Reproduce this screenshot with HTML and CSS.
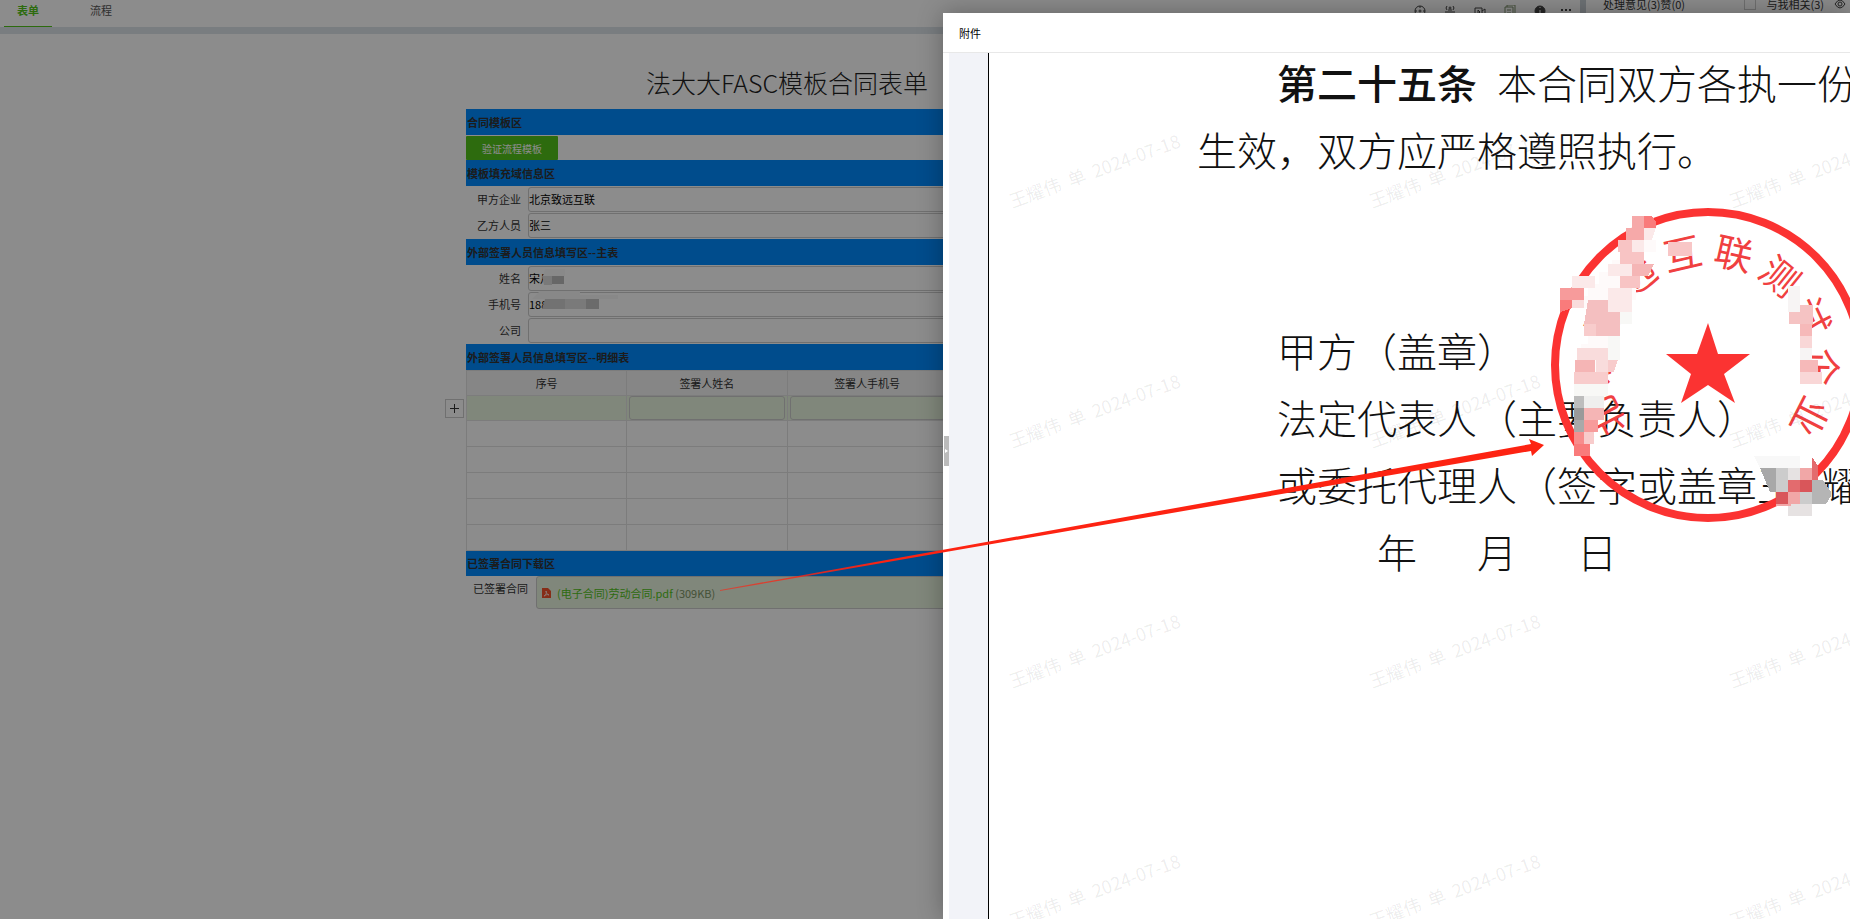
FILE: index.html
```html
<!DOCTYPE html>
<html lang="zh-CN">
<head>
    <meta charset="UTF-8">
    <meta name="viewport" content="width=device-width, initial-scale=1.0">
    <title>法大大FASC模板合同表单</title>
    <link rel="stylesheet" href="styles.css">
</head>
<body>
    <div class="page">
        <main class="main">
            <header class="topbar">
                <nav class="tabs">
                    <button class="tab active" type="button">表单</button>
                    <button class="tab" type="button">流程</button>
                </nav>
                <div class="tools">
                    <button type="button" aria-label="定位">
                        <svg viewBox="0 0 12 12"><circle cx="6" cy="6" r="5"/><circle cx="6" cy="6" r="1"/><path d="M6 1v2M6 9v2M1 6h2M9 6h2"/></svg>
                    </button>
                    <button type="button" aria-label="会议">
                        <svg viewBox="0 0 12 12"><circle cx="6" cy="3" r="1"/><path d="M3 1Q1 3 3 5M9 1q2 2 0 4M1 7h10M2 9h8M4 5h4"/></svg>
                    </button>
                    <button type="button" aria-label="视频">
                        <svg viewBox="0 0 12 12"><path d="M1 3h7v8H1zM8 6l3-2v6L8 8M4 5l2 2-2 2z"/></svg>
                    </button>
                    <button type="button" aria-label="复制">
                        <svg class="tool-green" viewBox="0 0 12 12"><path d="M1 2h8v10H1zM3 2V0h8v10H9M3 5h4M3 8h4"/></svg>
                    </button>
                    <button type="button" aria-label="信息">
                        <svg viewBox="0 0 12 12"><circle class="fill" cx="6" cy="6" r="5"/><path class="light" d="M6 5v4M6 2v1"/></svg>
                    </button>
                    <button class="more" type="button" aria-label="更多">
                        <svg viewBox="0 0 12 12"><path class="dots" d="M1 5h2M5 5h2M9 5h2"/></svg>
                    </button>
                </div>
            </header>

            <form class="form">
                <h1 class="form-title">法大大FASC模板合同表单</h1>

                <h2 class="section">合同模板区</h2>
                <div class="action-row">
                    <button class="verify-button" type="button">验证流程模板</button>
                </div>

                <h2 class="section">模板填充域信息区</h2>
                <div class="fields">
                    <div class="field">
                        <label for="company-a">甲方企业</label>
                        <input id="company-a" type="text" value="北京致远互联">
                    </div>
                    <div class="field">
                        <label for="person-b">乙方人员</label>
                        <input id="person-b" type="text" value="张三">
                    </div>
                </div>

                <h2 class="section">外部签署人员信息填写区--主表</h2>
                <div class="fields">
                    <div class="field">
                        <label for="name">姓名</label>
                        <input id="name" type="text" value="宋月">
                        <svg class="mask-name" viewBox="0 0 24 18">
                            <path fill="#fafafa" d="M3 0h20v7H1z"/>
                            <path fill="#dcdcdc" d="M0 7h10v9H2z"/>
                            <path fill="#bcbcbc" d="M10 7h12v8H10z"/>
                        </svg>
                    </div>
                    <div class="field">
                        <label for="phone">手机号</label>
                        <input id="phone" type="text" value="188">
                        <svg class="mask-phone" viewBox="0 0 88 20">
                            <path fill="#f8f8f8" d="M8 0h40v4h38v4H0z"/>
                            <path fill="#d0d0d0" d="M13 8h20v10H10z"/>
                            <path fill="#dedede" d="M33 8h21v10H33z"/>
                            <path fill="#c4c4c4" d="M54 8h13v10H54z"/>
                        </svg>
                    </div>
                    <div class="field">
                        <label for="corp">公司</label>
                        <input id="corp" type="text">
                    </div>
                </div>

                <h2 class="section">外部签署人员信息填写区--明细表</h2>
                <div class="detail">
                    <button class="add-button" type="button" aria-label="添加一行">
                        <svg viewBox="0 0 9 9"><path d="M4 0h1v4h4v1H5v4H4V5H0V4h4z"/></svg>
                    </button>
                    <table>
                        <thead>
                            <tr><th>序号</th><th>签署人姓名</th><th>签署人手机号</th><th></th></tr>
                        </thead>
                        <tbody>
                            <tr class="editing">
                                <td></td>
                                <td><input type="text" aria-label="签署人姓名"></td>
                                <td><input type="text" aria-label="签署人手机号"></td>
                                <td></td>
                            </tr>
                            <tr><td></td><td></td><td></td><td></td></tr>
                            <tr><td></td><td></td><td></td><td></td></tr>
                            <tr><td></td><td></td><td></td><td></td></tr>
                            <tr><td></td><td></td><td></td><td></td></tr>
                            <tr><td></td><td></td><td></td><td></td></tr>
                        </tbody>
                    </table>
                </div>

                <h2 class="section">已签署合同下载区</h2>
                <div class="download">
                    <span class="download-label">已签署合同</span>
                    <div class="file-box">
                        <svg class="file-icon" viewBox="0 0 9 10"><path fill="#f5532d" d="M0 0h6l3 3v7H0z"/><path fill="none" stroke="#ffd9cc" d="M2 8c2-1 3-3 2-5 0 2 1 3 3 4-2-1-3 0-5 1"/></svg>
                        <a href="#">(电子合同)劳动合同.pdf <span class="file-size">(309KB)</span></a>
                    </div>
                </div>
            </form>
        </main>

        <aside class="sidebar">
            <div class="opinion-bar">
                <span>处理意见(3)赞(0)</span>
                <label class="related"><input type="checkbox">与我相关(3)</label>
                <svg class="eye" viewBox="0 0 12 10"><path d="M1 5q5-8 10 0-5 8-10 0z"/><circle cx="6" cy="5" r="2"/></svg>
            </div>
        </aside>
    </div>

    <div class="overlay"></div>

    <section class="drawer">
        <header class="drawer-header">附件</header>
        <div class="drawer-body">
            <button class="handle" type="button" aria-label="收起">
                <svg viewBox="0 0 5 30"><path fill="#fff" d="M1 13l3 2-3 2z"/></svg>
            </button>
            <div class="viewer">
                <article class="paper">
                    <div class="contract">
                        <p class="indent"><strong>第二十五条</strong>本合同双方各执一份</p>
                        <p>生效，双方应严格遵照执行。</p>
                        <p class="indent signature">甲方（盖章）</p>
                        <p class="indent">法定代表人（主要负责人）</p>
                        <p class="indent">或委托代理人（签字或盖章<span class="signer">王</span>耀</p>
                        <p class="date"><span>年</span><span>月</span><span>日</span></p>
                    </div>

                    <svg class="seal" viewBox="0 0 370 350">
                        <circle cx="228" cy="175" r="153" fill="none" stroke="#fb3332" stroke-width="8"/>
                        <path fill="#fb3332" d="M228 133l10 31h32l-26 20 11 29-27-18-27 18 10-29-25-20h31z"/>
                        <g class="seal-text">
                            <text x="228" y="75" transform="rotate(-117 228 175)">北</text>
                            <text x="228" y="75" transform="rotate(-91 228 175)">京</text>
                            <text x="228" y="75" transform="rotate(-65 228 175)">致</text>
                            <text x="228" y="75" transform="rotate(-39 228 175)">远</text>
                            <text x="228" y="75" transform="rotate(-13 228 175)">互</text>
                            <text x="228" y="75" transform="rotate(13 228 175)">联</text>
                            <text x="228" y="75" transform="rotate(39 228 175)">测</text>
                            <text x="228" y="75" transform="rotate(65 228 175)">试</text>
                            <text x="228" y="75" transform="rotate(91 228 175)">企</text>
                            <text x="228" y="75" transform="rotate(117 228 175)">业</text>
                        </g>
                        <!-- pixelated name, left side -->
                        <g shape-rendering="crispEdges">
                            <path fill="#fefafa" d="M152 50h24v12h-12v24h-8v24h-4v24h-12v24h-12v36h-4v12h-20v-12h-6v-24h3v-16h7v-36h-24v-12h24v-12h11v-12h13v-12h12z"/>
                            <path fill="#f6a9a9" d="M152 26h12v12h-12zM146 38h18v12h-18z"/>
                            <path fill="#f97b7b" d="M164 26h8l4 6v6h-12zM80 110h12v8l-12 4zM94 254h16v12H94z"/>
                            <path fill="#fbe9e9" d="M164 38h12l-4 12h-8zM152 50h12v12h-12zM128 74h24v12h-24zM128 98h24v12h-24zM128 110h24v12h-24zM92 86h23v12H92z"/>
                            <path fill="#f8c4c4" d="M138 50h14v12h-14zM140 62h24v12h-24zM140 86h20v12h-20z"/>
                            <path fill="#f5b5b5" d="M152 74h22l-6 12h-16zM95 170h20v12H95zM104 218h20v12h-20z"/>
                            <path fill="#f79b9b" d="M80 98h24v12H80zM104 230h14v12h-14z"/>
                            <path fill="#f9dcdc" d="M92 110h12v8H92zM97 158h31v12H97zM116 170h12v12h-12z"/>
                            <path fill="#f4bfc0" d="M108 110h20v12h12v24h-24v-12h-12z"/>
                            <path fill="#f8cccc" d="M104 134h12v12h-12zM128 170h10l-4 12h-6zM94 182h34v12H94zM104 242h10v12h-10z"/>
                            <path fill="#f8f8f6" d="M140 122h12v12h-12zM128 146h12v24h-12zM94 194h34v12H94z"/>
                            <path fill="#efefee" d="M104 206h20v12h-20z"/>
                            <path fill="#bdbdbd" d="M94 206h10v12H94z"/>
                            <path fill="#9a9a9a" d="M94 218h10v12H94z"/>
                            <path fill="#a9a9a9" d="M94 230h10v12H94z"/>
                            <path fill="#f78d8d" d="M94 242h10v12H94z"/>
                        </g>
                        <!-- right side -->
                        <g shape-rendering="crispEdges">
                            <path fill="#f8c6c6" d="M188 52h24v14h-24z"/>
                            <path fill="#f7f4f4" d="M308 96h12v26h-12zM320 158h12v12h-12z"/>
                            <path fill="#f5c3c3" d="M320 115h13v19h-13zM309 122h11v12h-11z"/>
                            <path fill="#f6b9b9" d="M320 134h12v12h-12zM320 170h18v12h-18z"/>
                            <path fill="#f9d7d7" d="M320 146h12v12h-12zM320 182h22v12h-22z"/>
                        </g>
                        <!-- signer name -->
                        <g shape-rendering="crispEdges">
                            <path fill="#f8f8f8" d="M274 266h46v12h-40z"/>
                            <path fill="#a8a8a8" d="M280 278h16v24h-6z"/>
                            <path fill="#cccccc" d="M296 278h12v24h-12zM320 302h12v12h-12z"/>
                            <path fill="#e6e2e2" d="M308 278h12v12h-12zM308 314h24v12h-24z"/>
                            <path fill="#f1a7a7" d="M320 278h12v12h-12zM308 302h12v12h-12zM293 302h3v14h15v-2h-15v-12z"/>
                            <path fill="#e36b6e" d="M332 267l6 9v14h-6zM308 290h12v12h-12z"/>
                            <path fill="#d9565a" d="M320 290h12v12h-12zM296 302h12v12h-12z"/>
                            <path fill="#b5b5b5" d="M332 290h11l8 12v4l-5 8h-14z"/>
                        </g>
                    </svg>
                </article>
                <div class="watermarks" aria-hidden="true">
                    <span>王耀伟&nbsp; 单&nbsp; 2024-07-18</span>
                    <span>王耀伟&nbsp; 单&nbsp; 2024-07-18</span>
                    <span>王耀伟&nbsp; 单&nbsp; 2024-07-18</span>
                    <span>王耀伟&nbsp; 单&nbsp; 2024-07-18</span>
                    <span>王耀伟&nbsp; 单&nbsp; 2024-07-18</span>
                    <span>王耀伟&nbsp; 单&nbsp; 2024-07-18</span>
                    <span>王耀伟&nbsp; 单&nbsp; 2024-07-18</span>
                    <span>王耀伟&nbsp; 单&nbsp; 2024-07-18</span>
                    <span>王耀伟&nbsp; 单&nbsp; 2024-07-18</span>
                    <span>王耀伟&nbsp; 单&nbsp; 2024-07-18</span>
                    <span>王耀伟&nbsp; 单&nbsp; 2024-07-18</span>
                    <span>王耀伟&nbsp; 单&nbsp; 2024-07-18</span>
                </div>
            </div>
        </div>
    </section>

    <svg class="arrow" viewBox="0 0 824 152">
        <defs>
            <linearGradient id="fade">
                <stop offset="0" stop-color="#fd2312" stop-opacity=".6"/>
                <stop offset=".2" stop-color="#fd2312"/>
            </linearGradient>
        </defs>
        <path fill="url(#fade)" d="M0 151L811 5l-2-5 15 6-12 11-1-5L0 152z"/>
    </svg>
</body>
</html>
```
FILE: styles.css
```css
* {
    box-sizing: border-box;
}

body {
    margin: 0;
    height: 100vh;
    overflow: hidden;
    position: relative;
    font-family: "Noto Sans CJK SC", sans-serif;
    font-size: 11px;
    color: #333;
    background: #fff;
}

button,
input {
    font: inherit;
    color: inherit;
    margin: 0;
    padding: 0;
}

button {
    border: none;
    background: none;
    cursor: pointer;
}

h1,
h2,
p {
    margin: 0;
}

svg {
    display: block;
}

.page {
    display: grid;
    grid-template-columns: 1fr 270px;
    height: 100%;
}

/* top bar */
.topbar {
    display: flex;
    justify-content: space-between;
    height: 34px;
    padding: 0 8px 0 4px;
    border-bottom: 7px solid #dde4e9;
}

.tabs {
    display: flex;
    gap: 25px;
}

.tab {
    width: 48px;
    padding-bottom: 6px;
    border-bottom: 1px solid transparent;
    color: #555;
}

.tab.active {
    color: #52c41a;
    font-weight: bold;
    border-color: #52c41a;
}

.tools {
    display: flex;
    gap: 18px;
    padding-top: 5px;
}

.tools button {
    height: 12px;
}

.tools .more {
    margin-left: -4px;
}

.tools svg {
    width: 12px;
    height: 12px;
    fill: none;
    stroke: #444;
}

.tools .tool-green {
    stroke: #7d8f6a;
}

.tools .fill {
    fill: #444;
}

.tools .light {
    stroke: #fff;
}

.tools .dots {
    stroke-width: 2;
}

/* form */
.form {
    width: 642px;
    margin: 0 auto;
    padding-right: 6px;
    box-sizing: content-box;
}

.form-title {
    padding: 30px 0 9px;
    font-size: 25px;
    font-weight: 300;
    line-height: 36px;
    text-align: center;
    color: #222;
}

.section {
    height: 26px;
    padding-left: 1px;
    line-height: 26px;
    font-size: 11px;
    font-weight: 700;
    background: #008aff;
}

.action-row {
    height: 25px;
    padding-top: 1px;
}

.verify-button {
    width: 92px;
    height: 24px;
    border-radius: 1px;
    font-size: 10px;
    color: #fff;
    background: #52c41a;
}

.fields {
    padding-bottom: 1px;
}

.field {
    position: relative;
    display: grid;
    grid-template-columns: 55px 1fr;
    gap: 7px;
    align-items: center;
    height: 26px;
}

.field label {
    text-align: right;
}

.field input {
    height: 25px;
    border: 1px solid #ccc;
    border-radius: 3px;
    color: #000;
    background: #fff;
}

.mask-name {
    position: absolute;
    left: 76px;
    top: 4px;
    width: 24px;
    height: 18px;
}

.mask-phone {
    position: absolute;
    left: 66px;
    top: 0;
    width: 88px;
    height: 20px;
}

.detail {
    position: relative;
    height: 180px;
}

.detail table {
    width: 100%;
    border-collapse: collapse;
    table-layout: fixed;
}

.detail th,
.detail td {
    height: 26px;
    padding: 0 2px;
    border: 1px solid #e2e2e2;
    font-weight: normal;
    line-height: 16px;
}

.detail th,
.detail .editing td {
    height: 25px;
}

.detail th {
    background: #f5f5f5;
}

.detail .editing {
    background: #eaf6e0;
}

.detail td input {
    display: block;
    width: 100%;
    height: 24px;
    border: 1px solid #ccc;
    border-radius: 3px;
    background: transparent;
}

.add-button {
    position: absolute;
    left: -21px;
    top: 29px;
    display: grid;
    place-items: center;
    width: 19px;
    height: 19px;
    border: 1px solid #ccc;
}

.add-button svg {
    width: 9px;
    height: 9px;
    fill: #333;
}

.download {
    display: grid;
    grid-template-columns: 62px 1fr;
    gap: 8px;
}

.download-label {
    text-align: right;
    line-height: 24px;
}

.file-box {
    display: flex;
    align-items: center;
    gap: 6px;
    height: 33px;
    padding-left: 5px;
    border: 1px solid #ccc;
    border-radius: 3px;
    background: #eaf6e0;
}

.file-icon {
    width: 9px;
    height: 10px;
}

.file-box a {
    color: #52c41a;
    text-decoration: none;
}

.file-size {
    color: #7d9466;
}

/* right column */
.sidebar {
    border-left: 6px solid #c9d0d6;
}

.opinion-bar {
    display: flex;
    align-items: center;
    height: 7px;
    padding: 0 4px 0 17px;
    line-height: 12px;
    white-space: nowrap;
}

.related {
    display: flex;
    align-items: center;
    gap: 10px;
    margin-left: auto;
}

.related input {
    appearance: none;
    width: 12px;
    height: 12px;
    border: 1px solid #ccc;
}

.eye {
    width: 12px;
    height: 10px;
    margin-left: 10px;
    fill: none;
    stroke: #444;
}

/* dimmed layer */
.overlay {
    position: absolute;
    inset: 0;
    background: rgba(0, 0, 0, 0.45);
}

/* attachment drawer */
.drawer {
    position: absolute;
    top: 13px;
    right: 0;
    bottom: 0;
    left: 943px;
    display: flex;
    flex-direction: column;
    background: #fff;
    box-shadow: 0 0 24px rgba(0, 0, 0, 0.3);
}

.drawer-header {
    height: 40px;
    padding-left: 16px;
    line-height: 40px;
    color: #000;
    border-bottom: 1px solid #e8e8e8;
}

.drawer-body {
    display: flex;
    flex: 1;
    min-height: 0;
}

.handle {
    align-self: flex-start;
    width: 5px;
    height: 30px;
    margin: 383px 0 0 1px;
    background: #bbb;
}

.handle svg {
    width: 5px;
    height: 30px;
}

.viewer {
    position: relative;
    flex: 1;
    min-width: 0;
    padding-left: 39px;
    overflow: hidden;
    background: #f2f3f8;
}

.paper {
    display: flow-root;
    position: relative;
    height: 100%;
    padding-left: 208px;
    border-left: 1px solid #000;
    background: #fff;
    color: #111;
    font-size: 40px;
    font-weight: 300;
    line-height: 67px;
    white-space: nowrap;
}

/* the document is scrolled a little past the line top */
.contract {
    margin-top: -4px;
}

.paper strong {
    margin-right: 20px;
    font-weight: 500;
}

.indent {
    padding-left: 80px;
}

.signature {
    margin-top: 134px;
}

.signer {
    margin-right: 24px;
}

.date {
    display: flex;
    gap: 60px;
    padding-left: 180px;
}

.seal {
    position: absolute;
    left: 491px;
    top: 137px;
    width: 370px;
    height: 350px;
}

.seal-text {
    fill: #f04040;
    font-size: 38px;
    font-weight: 400;
    text-anchor: middle;
}

.watermarks {
    position: absolute;
    inset: 0 0 0 39px;
    display: grid;
    grid-template-columns: repeat(3, 180px);
    grid-auto-rows: 26px;
    gap: 214px 180px;
    padding: 104px 0 0 16px;
    overflow: hidden;
    color: rgba(0, 0, 0, 0.08);
    font-size: 18px;
    line-height: 26px;
    text-align: center;
    white-space: nowrap;
}

.watermarks span {
    transform: rotate(-20deg);
}

/* pointer from the file to the signature area */
.arrow {
    position: absolute;
    left: 720px;
    top: 439px;
    width: 824px;
    height: 152px;
}
```
